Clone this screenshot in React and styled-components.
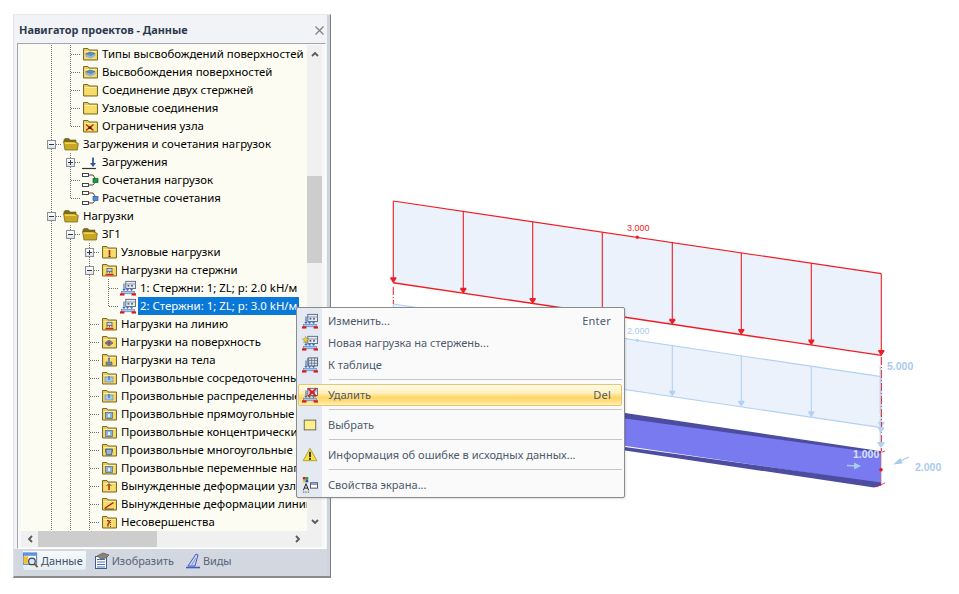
import React from 'react';
import styled, { createGlobalStyle } from 'styled-components';

const Global = createGlobalStyle`
  html, body { margin: 0; padding: 0; background: #fff; }
  #root { width: 959px; height: 594px; overflow: hidden; }
`;

const FONT = `"Noto Sans", "Liberation Sans", sans-serif`;

const Page = styled.div`
  position: relative;
  display: flex;
  align-items: flex-start;
  width: 959px;
  height: 594px;
  background: #fff;
  font-family: ${FONT};
  font-size: 11.4px;
`;

const Panel = styled.aside`
  flex: none;
  box-sizing: border-box;
  width: 318px;
  height: 564px;
  margin: 14px 0 0 13px;
  display: flex;
  flex-direction: column;
  background: #f1f3f6;
  border-top: 1px solid #e6e8ec;
  border-left: 1px solid #dfe2e8;
  border-right: 1px solid #7f7f7f;
  border-bottom: 2px solid #8a8a8a;
  box-shadow: inset -3px 0 0 #cfd3dc;
`;

const TitleBar = styled.header`
  flex: none;
  height: 28px;
  display: flex;
  align-items: center;
  justify-content: space-between;
  padding: 0 6px 0 5px;
  box-sizing: border-box;
`;

const Title = styled.h1`
  margin: 0;
  font-size: 10.9px;
  font-weight: 700;
  color: #2c3a4c;
`;

const CloseIcon = styled.svg`
  width: 9px;
  height: 9px;
  margin-top: 2px;
  stroke: #7a8088;
  stroke-width: 1.2;
`;

const Frame = styled.div`
  flex: none;
  box-sizing: border-box;
  margin-left: 3px;
  width: 309px;
  height: 506px;
  padding: 1px 3px;
  background: #f7f8f9;
  border: 1px solid #fff;
  border-top-color: #a4a6aa;
  border-left-color: #a4a6aa;
  display: grid;
  grid-template-columns: 286px 15px;
  grid-template-rows: 486px 16px;
`;

const Tree = styled.div`
  overflow: hidden;
  background: #fdfcf3;
  padding-left: 21px;
  color: #000;
`;

const Row = styled.div`
  display: flex;
  align-items: center;
  height: 18px;
  white-space: nowrap;
`;

const dotsV = `repeating-linear-gradient(to bottom, #707070 0 1px, transparent 1px 2px)`;
const dotsH = `repeating-linear-gradient(to right, #707070 0 1px, transparent 1px 2px)`;

const Cell = styled.span`
  flex: none;
  position: relative;
  width: 19px;
  height: 18px;
  &::before {
    content: '';
    position: absolute;
    left: 9px;
    top: 0;
    width: 1px;
    height: ${p => (p.$v === 'half' ? '10px' : p.$v === 'full' ? '18px' : '0')};
    background: ${dotsV};
  }
  &::after {
    content: '';
    position: absolute;
    left: 10px;
    top: 9px;
    height: 1px;
    width: ${p => (p.$h ? '10px' : '0')};
    background: ${dotsH};
  }
`;

const Expander = styled.span`
  position: absolute;
  z-index: 1;
  left: 5px;
  top: 5px;
  width: 7px;
  height: 7px;
  border: 1px solid #8b8f96;
  background: linear-gradient(#fff, #dfe2e6);
  &::before {
    content: '';
    position: absolute;
    left: 1px;
    top: 3px;
    width: 5px;
    height: 1px;
    background: #2e3a50;
  }
  &::after {
    content: '';
    position: absolute;
    left: 3px;
    top: 1px;
    width: 1px;
    height: ${p => (p.$plus ? '5px' : '0')};
    background: #2e3a50;
  }
`;

const TreeIconSlot = styled.span`
  flex: none;
  display: flex;
  width: 16px;
  height: 16px;
  margin-left: 2px;
`;

const Label = styled.span`
  flex: none;
  height: 18px;
  line-height: 18px;
  margin-left: 2px;
  padding: 0 2px;
  background: ${p => (p.$selected ? '#0a78d6' : 'transparent')};
  color: ${p => (p.$selected ? '#fff' : '#000')};
`;

const ScrollV = styled.div`
  background: #f0f0f0;
  position: relative;
  display: flex;
  flex-direction: column;
  align-items: center;
  justify-content: space-between;
  padding: 5px 0;
  box-sizing: border-box;
`;

const ThumbV = styled.div`
  position: absolute;
  left: 0;
  top: 131px;
  width: 15px;
  height: 87px;
  background: #cdcdcd;
`;

const ScrollH = styled.div`
  grid-column: 1 / 3;
  background: #f0f0f0;
  position: relative;
  display: flex;
  align-items: center;
  justify-content: space-between;
  padding: 0 20px 0 5px;
`;

const ThumbH = styled.div`
  position: absolute;
  left: 17px;
  top: 0;
  width: 119px;
  height: 16px;
  background: #cdcdcd;
`;

const Arrow = styled.svg`
  width: 8px;
  height: 8px;
  fill: none;
  stroke: #5a5a5a;
  stroke-width: 1.8;
`;

const TabBar = styled.nav`
  flex: 1;
  display: flex;
  align-items: flex-start;
  background: #d3d7e0;
  margin: 0 3px 0 0;
  padding: 2px 0 0 8px;
  font-size: 10.9px;
`;

const Tab = styled.div`
  display: flex;
  align-items: center;
  gap: 2px;
  height: 19px;
  padding: 0 3px 0 ${p => (p.$active ? '0' : '6px')};
  color: ${p => (p.$active ? '#3f5066' : '#56647a')};
  background: ${p => (p.$active ? 'linear-gradient(#f6f9fa, #e6eef2)' : 'transparent')};
  border: 1px solid ${p => (p.$active ? '#c7dbe0' : 'transparent')};
  border-top: none;
  border-radius: 0 0 4px 4px;
`;

const Viewport = styled.svg`
  flex: 1;
  display: block;
  height: 594px;
`;

const Menu = styled.div`
  position: absolute;
  left: 296px;
  top: 307px;
  box-sizing: border-box;
  width: 329px;
  height: 191px;
  padding: 2px 1px;
  display: flex;
  flex-direction: column;
  border: 1px solid #8b8b8b;
  border-radius: 2px;
  background: linear-gradient(to right, #e5e9f2 0 25px, #fafafa 25px);
  box-shadow: 1px 1px 2px rgba(0, 0, 0, 0.12);
  color: #4d5a6c;
  font-size: 11.05px;
`;

const MenuItem = styled.div`
  flex: none;
  box-sizing: border-box;
  height: 22px;
  display: flex;
  align-items: center;
  justify-content: space-between;
  padding: 0 10px 1px 0;
  border: 1px solid ${p => (p.$hot ? '#e6c66c' : 'transparent')};
  border-radius: 2px;
  margin-right: 1px;
  background: ${p =>
    p.$hot
      ? 'linear-gradient(#fffbe9 0%, #fff0c0 38%, #ffd768 62%, #ffdc78 78%, #fff0b8 100%)'
      : 'transparent'};
`;

const MenuMain = styled.span`
  display: flex;
  align-items: center;
`;

const MenuIconSlot = styled.span`
  flex: none;
  width: 29px;
  height: 20px;
  display: flex;
  align-items: center;
  padding-left: 3px;
  box-sizing: border-box;
`;

const Shortcut = styled.span`
  letter-spacing: 0.2px;
`;

const Separator = styled.hr`
  flex: none;
  box-sizing: border-box;
  height: 1px;
  margin: 3px 1px 4px 31px;
  border: none;
  background: #c6c6c6;
`;

/* ---- icons ---- */

const FolderShape = ({ children }) => (
  <svg width="16" height="16" viewBox="0 0 16 16">
    <path d="M1.500 2.500h4.500l1 1.500h8.500v10h-14z" fill="#eccb50" stroke="#7c6a26" />
    <path d="M2.500 5h12v1.200h-12z" fill="#fbf0a8" />
    <path d="M2.500 6.200h12v6.800h-12z" fill="#f6dc6c" />
    {children}
  </svg>
);

const OpenFolder = () => (
  <svg width="16" height="16" viewBox="0 0 16 16">
    <path d="M1 3.500l1-1h4l1 1.500h6v2h-12z" fill="#7d6c1e" stroke="#6d5c16" strokeWidth=".6" />
    <path d="M.5 5.500h11l3.800 2-1 6.500h-12.300z" fill="#c8a822" stroke="#6d5c16" strokeWidth=".7" />
    <path d="M1.500 6.500h9.500l2.500 1.500h-11.500z" fill="#ecd45a" />
  </svg>
);

const MiniBeam = ({ x = 4, y = 5, s = 1 }) => (
  <g transform={`translate(${x} ${y}) scale(${s})`}>
    <rect x="1.500" y=".5" width="5" height="3" fill="#cfd8e6" stroke="#4c5a70" strokeWidth=".8" />
    <path d="M1.500 3.500v2M4 3.500v2M6.500 3.500v2" stroke="#3a60b0" strokeWidth=".9" />
    <rect x="0" y="6" width="8" height="1.500" fill="#e02020" />
  </g>
);

const treeIcons = {
  plain: () => <FolderShape />,
  release: () => (
    <FolderShape>
      <path d="M3.500 8l4.500-2 5 1.500-4.500 2.500z" fill="#5e8ec4" stroke="#39608c" strokeWidth=".6" />
      <path d="M3.500 8v2.500l5 2 5-2.500v-2.500l-4.500 2.500z" fill="#8fb4da" />
    </FolderShape>
  ),
  restraint: () => (
    <FolderShape>
      <path d="M4 6.500l7.500 6M11.500 6.500l-7.500 6" stroke="#d02010" strokeWidth="1.500" />
      <rect x="6.500" y="8.500" width="3" height="2.500" fill="#302810" />
    </FolderShape>
  ),
  nodal: () => (
    <FolderShape>
      <path d="M8.500 6v5" stroke="#c01818" strokeWidth="1.600" />
      <rect x="7.500" y="11.500" width="2" height="1.500" fill="#302810" />
    </FolderShape>
  ),
  member: () => (
    <FolderShape>
      <MiniBeam x={4.500} y={5.800} />
    </FolderShape>
  ),
  surface: () => (
    <FolderShape>
      <path d="M4 9l4-3 4 3-4 3z" fill="#6a7ea8" stroke="#3a4a70" strokeWidth=".6" />
      <circle cx="8" cy="9" r="1.300" fill="#c04030" />
    </FolderShape>
  ),
  solid: () => (
    <FolderShape>
      <path d="M8 5.500v4" stroke="#3060a8" strokeWidth="1.400" />
      <path d="M5 10h6v3h-6z" fill="#7a8ea8" stroke="#3a4a70" strokeWidth=".5" />
    </FolderShape>
  ),
  free: () => (
    <FolderShape>
      <rect x="4" y="7" width="8" height="5" fill="#a8c8ea" stroke="#5a88bc" strokeWidth=".6" />
      <path d="M8 6v4" stroke="#2f68b8" strokeWidth="1.200" />
    </FolderShape>
  ),
  freeRect: () => (
    <FolderShape>
      <rect x="4.500" y="6.500" width="7" height="6" fill="#8fb0dc" stroke="#44669c" strokeWidth=".7" />
      <path d="M7 8h2v3h-2z" fill="#e8f0fa" />
    </FolderShape>
  ),
  freePoly: () => (
    <FolderShape>
      <path d="M4.500 7h7v2l-1 4h-5l-1-4z" fill="#6e8cc0" stroke="#34507e" strokeWidth=".7" />
      <path d="M7 8v4M9 8v4" stroke="#e8f0fa" strokeWidth=".8" />
    </FolderShape>
  ),
  imposed: () => (
    <FolderShape>
      <path d="M8 6v6" stroke="#b02020" strokeWidth="1.500" />
      <path d="M5.500 8l2.500-2.500 2.500 2.500" fill="none" stroke="#2a7a30" strokeWidth=".9" />
    </FolderShape>
  ),
  imposedLine: () => (
    <FolderShape>
      <path d="M3.500 12.500l9-6" stroke="#b02020" strokeWidth="1.500" />
      <path d="M4 13h9" stroke="#403810" strokeWidth=".8" />
    </FolderShape>
  ),
  imperfection: () => (
    <FolderShape>
      <path d="M6 6.500c3 0 3 2 1 3.500v2.500" fill="none" stroke="#b02020" strokeWidth="1.400" />
      <path d="M9.500 6v7" stroke="#403810" strokeWidth=".8" strokeDasharray="1 1" />
    </FolderShape>
  ),
  open: () => <OpenFolder />,
  loadcase: () => (
    <svg width="16" height="16" viewBox="0 0 16 16">
      <path d="M0 14.500h14" stroke="#333" strokeWidth="1.200" />
      <path d="M11 3.500v6" stroke="#4a6ca8" strokeWidth="2" />
      <path d="M8 9h6l-3 4z" fill="#2a58a8" />
    </svg>
  ),
  comboG: () => <Combo color="#10a030" edge="#0a6a20" />,
  comboB: () => <Combo color="#4a8ee0" edge="#2a5ca0" />,
  load: () => <LoadIcon />,
};

function Combo({ color, edge }) {
  return (
    <svg width="17" height="16" viewBox="0 0 17 16" style={{ overflow: 'visible' }}>
      <rect x=".5" y="1.500" width="6" height="3" fill="#fff" stroke="#333" strokeWidth=".9" />
      <rect x=".5" y="11.500" width="6" height="3" fill="#fff" stroke="#333" strokeWidth=".9" />
      <path d="M7 3h4l2 3v1M7 13h4l2-2.500" fill="none" stroke="#333" strokeWidth=".9" />
      <rect x="11" y="6.500" width="5" height="4" fill={color} stroke={edge} strokeWidth=".7" />
    </svg>
  );
}

function LoadIcon({ badge }) {
  return (
    <svg width="16" height="16" viewBox="0 0 18 18" style={{ overflow: 'visible' }}>
      <rect x="6.500" y="1.500" width="11" height="8" fill="#e6ebf3" stroke="#57657a" />
      <path d="M6.500 4.500h11" stroke="#8794a6" />
      <rect x="8.500" y="5.500" width="2" height="2" fill="#57657a" />
      <rect x="12.500" y="5.500" width="2" height="2" fill="#57657a" />
      <path d="M4.500 4v7.500M8.500 9.500v2M13 9.500v2" stroke="#3f72c4" strokeWidth="1.300" />
      <path d="M2.500 10h4l-2 2.500zM6.500 10.500h4l-2 2zM11 10.500h4l-2 2z" fill="#3f72c4" />
      <rect x="1.500" y="13" width="15" height="2.500" fill="#a9c8ee" stroke="#4f7cc0" strokeWidth=".7" />
      <rect x="0" y="15" width="5" height="2.500" fill="#e01818" />
      <rect x="13" y="15" width="5" height="2.500" fill="#e01818" />
      {badge === 'star' && (
        <path d="M4 1.500l1 2.500 2.500 .5-2 1.700 .6 2.600-2.100-1.300-2.100 1.300 .6-2.600-2-1.700 2.500-.5z" fill="#e8d440" stroke="#8c8020" strokeWidth=".5" />
      )}
      {badge === 'table' && (
        <g>
          <rect x="7.500" y="1" width="10" height="9" fill="#dfe5ee" stroke="#57657a" />
          <path d="M7.500 4h10M7.500 7h10M10.800 1v9M14.200 1v9" stroke="#57657a" strokeWidth=".8" />
        </g>
      )}
      {badge === 'x' && <path d="M7 1.500l9 9M16 1.500l-9 9" stroke="#e02020" strokeWidth="2" />}
    </svg>
  );
}

const WarningIcon = () => (
  <svg width="16" height="15" viewBox="0 0 18 17">
    <path d="M9 1.500l7.800 14h-15.600z" fill="#f6e23a" stroke="#a89a30" strokeLinejoin="round" />
    <rect x="8" y="5.500" width="2" height="6" fill="#222" />
    <rect x="8" y="12.500" width="2" height="2" fill="#222" />
  </svg>
);

const SelectIcon = () => (
  <svg width="16" height="16" viewBox="0 0 18 18">
    <rect x="2.500" y="3.500" width="13" height="11" fill="#fdf08a" stroke="#5c5c50" />
  </svg>
);

const DisplayIcon = () => (
  <svg width="16" height="18" viewBox="0 0 18 20">
    <rect x="1" y="1" width="3" height="3" fill="#c02020" />
    <rect x="4" y="1" width="3" height="3" fill="#20a030" />
    <rect x="1" y="4" width="3" height="3" fill="#e8c020" />
    <rect x="4" y="4" width="3" height="3" fill="#2050c0" />
    <path d="M1.500 16l3-7.500 3 7.500M2.500 13.500h4" fill="none" stroke="#222" strokeWidth="1.100" />
    <path d="M1 18h7" stroke="#222" strokeWidth="1" strokeDasharray="1 1" />
    <rect x="9.500" y="7.500" width="8" height="6" fill="#fff" stroke="#445" />
    <path d="M9.500 9h8" stroke="#5c7cc0" strokeWidth="1.500" />
  </svg>
);

const DataTabIcon = () => (
  <svg width="16" height="17" viewBox="0 0 17 17">
    <rect x=".5" y=".5" width="14" height="12" fill="#fff" stroke="#3f72c4" />
    <rect x=".5" y=".5" width="14" height="3" fill="#5e94dc" />
    <rect x=".5" y="4" width="5" height="8" fill="#f0c040" />
    <circle cx="9.500" cy="9.500" r="3.500" fill="#dbe8f4" stroke="#38465c" strokeWidth="1.300" />
    <path d="M12 12l3.500 3.500" stroke="#8a5a20" strokeWidth="2" />
  </svg>
);

const ShowTabIcon = () => (
  <svg width="16" height="17" viewBox="0 0 16 17">
    <rect x="1.500" y="4.500" width="11" height="12" fill="#fff" stroke="#3f5e90" />
    <path d="M3 7.500h8M3 10h8M3 12.500h8M3 15h8" stroke="#3f72c4" />
    <path d="M3 4l6-3 6 2-3 3-5 1z" fill="#8a8478" stroke="#4f4a40" strokeWidth=".6" />
  </svg>
);

const ViewsTabIcon = () => (
  <svg width="16" height="17" viewBox="0 0 16 17">
    <path d="M1 15.500h14" stroke="#3f5ec0" strokeWidth="1.600" />
    <path d="M3 14l8-12 2 1-3 11z" fill="#c7d4f0" stroke="#3f5ec0" />
    <path d="M6 14l5-8" stroke="#8a98c8" />
  </svg>
);

const rows = [
  ['vt', 'release', 'Типы высвобождений поверхностей'],
  ['vt', 'release', 'Высвобождения поверхностей'],
  ['vt', 'plain', 'Соединение двух стержней'],
  ['vt', 'plain', 'Узловые соединения'],
  ['vl', 'restraint', 'Ограничения узла'],
  ['m', 'open', 'Загружения и сочетания нагрузок'],
  ['vp', 'loadcase', 'Загружения'],
  ['vt', 'comboG', 'Сочетания нагрузок'],
  ['vl', 'comboB', 'Расчетные сочетания'],
  ['m', 'open', 'Нагрузки'],
  ['vm', 'open', 'ЗГ1'],
  ['vvp', 'nodal', 'Узловые нагрузки'],
  ['vvm', 'member', 'Нагрузки на стержни'],
  ['vvvt', 'load', '1: Стержни: 1; ZL; p: 2.0 kH/м'],
  ['vvvl', 'load', '2: Стержни: 1; ZL; p: 3.0 kH/м', true],
  ['vvt', 'member', 'Нагрузки на линию'],
  ['vvt', 'surface', 'Нагрузки на поверхность'],
  ['vvt', 'solid', 'Нагрузки на тела'],
  ['vvt', 'free', 'Произвольные сосредоточенные нагрузки'],
  ['vvt', 'free', 'Произвольные распределенные нагрузки'],
  ['vvt', 'freeRect', 'Произвольные прямоугольные нагрузки'],
  ['vvt', 'freeRect', 'Произвольные концентрические нагрузки'],
  ['vvt', 'freePoly', 'Произвольные многоугольные нагрузки'],
  ['vvt', 'freeRect', 'Произвольные переменные нагрузки'],
  ['vvt', 'imposed', 'Вынужденные деформации узлов'],
  ['vvt', 'imposedLine', 'Вынужденные деформации линий'],
  ['vvt', 'imperfection', 'Несовершенства'],
];

const cellProps = {
  v: { $v: 'full' },
  t: { $v: 'full', $h: true },
  l: { $v: 'half', $h: true },
  p: { $v: 'full', $h: true },
  m: { $v: 'full', $h: true },
};

function TreeRow({ path, icon, text, selected }) {
  const Icon = treeIcons[icon];
  return (
    <Row>
      {path.split('').map((c, i) => (
        <Cell key={i} {...cellProps[c]}>
          {(c === 'p' || c === 'm') && <Expander $plus={c === 'p'} />}
        </Cell>
      ))}
      <TreeIconSlot>
        <Icon />
      </TreeIconSlot>
      <Label $selected={selected}>{text}</Label>
    </Row>
  );
}

const menu = [
  { icon: <LoadIcon />, text: 'Изменить...', key: 'Enter' },
  { icon: <LoadIcon badge="star" />, text: 'Новая нагрузка на стержень...' },
  { icon: <LoadIcon badge="table" />, text: 'К таблице' },
  { sep: true },
  { icon: <LoadIcon badge="x" />, text: 'Удалить', key: 'Del', hot: true },
  { sep: true },
  { icon: <SelectIcon />, text: 'Выбрать' },
  { sep: true },
  { icon: <WarningIcon />, text: 'Информация об ошибке в исходных данных...' },
  { sep: true },
  { icon: <DisplayIcon />, text: 'Свойства экрана...' },
];

/* ---- drawing ---- */

const SLOPE = 0.149;
const RED = '#f01c24';
const BLUE = '#b3d1f2';
const topRed = x => 201 + SLOPE * (x - 393.3);
const botRed = x => 282.7 + SLOPE * (x - 393.3);
const topBlue = x => 304 + SLOPE * (x - 393.3);
const botBlue = x => 355 + SLOPE * (x - 393.3);
const beamTop = x => 413 + SLOPE * (x - 625);

const stations = [393.3, 463.3, 532.7, 602.3, 672.3, 741.3, 811.3, 881.3];

const Head = ({ x, y, color, w = 3 }) => (
  <path d={`M${x - w} ${y - 5}h${2 * w}v1.500l-${w} 4.500l-${w} -4.500z`} fill={color} />
);

const Drawing = () => (
  <Viewport viewBox="331 0 628 594" width="628" height="594">
    {/* red load */}
    <polygon
      points={`393.3,${topRed(393.3)} 881.3,${topRed(881.3)} 881.3,${botRed(881.3)} 393.3,${botRed(393.3)}`}
      fill="#ebf2fb"
    />
    {/* blue load */}
    <polygon
      points={`393.3,${topBlue(393.3)} 881.3,${topBlue(881.3)} 881.3,${botBlue(881.3)} 393.3,${botBlue(393.3)}`}
      fill="#ebf2fb"
    />
    <line x1="393.3" y1={topBlue(393.3)} x2="881.3" y2={topBlue(881.3)} stroke={BLUE} strokeWidth="1.200" />
    <line x1="393.3" y1={botBlue(393.3)} x2="881.3" y2={botBlue(881.3)} stroke={BLUE} strokeWidth="1.200" />
    {stations.map(x => (
      <g key={x}>
        <line x1={x} y1={topBlue(x)} x2={x} y2={botBlue(x) - 4} stroke={BLUE} strokeWidth="1.100" />
        <Head x={x} y={botBlue(x) - 1} color={BLUE} />
      </g>
    ))}
    <text x="627" y="334" fontFamily="Liberation Sans" fontSize="9" fill="#a9cbee">2.000</text>
    <circle cx="637.3" cy="340.300" r="1.600" fill={BLUE} />

    <line x1="393.3" y1={topRed(393.3)} x2="881.3" y2={topRed(881.3)} stroke={RED} strokeWidth="1.200" />
    <line x1="393.3" y1={botRed(393.3)} x2="881.3" y2={botRed(881.3)} stroke={RED} strokeWidth="1.400" />
    {stations.map(x => (
      <g key={x}>
        <line x1={x} y1={topRed(x)} x2={x} y2={botRed(x) - 3} stroke={RED} strokeWidth="1.100" />
        <Head x={x} y={botRed(x) - 0.5} color={RED} />
      </g>
    ))}
    <line x1="393.3" y1="287" x2="393.3" y2="304" stroke={RED} strokeDasharray="8 2 1 2" />
    <text x="627" y="231" fontFamily="Liberation Sans" fontSize="9" fill={RED}>3.000</text>
    <circle cx="637.3" cy="237.300" r="1.700" fill={RED} />

    {/* beam */}
    <polygon points="393,383 881.3,453 881.3,483.500 393,412" fill="#7a7af0" />
    <polygon points={`393,${beamTop(393)} 881.3,${beamTop(881.3)} 881.3,453.500 625,418.500 393,384`} fill="#4c4ca0" />
    <polygon points="393,412 625,447 881.3,482.500 881.3,485.500 874,487.500 625,450.500 393,416" fill="#4c4ca0" />
    <path d="M876 454l9-3M876 487l9-4" stroke={RED} strokeWidth="1" opacity=".8" />
    <line x1="881.5" y1="452" x2="881.5" y2="484" stroke="#f4c8d0" strokeWidth="1" />
    <line x1="881.3" y1="357" x2="881.3" y2="451" stroke={RED} strokeWidth="1.100" strokeDasharray="8 2 1 2" />
    <line x1="880.3" y1="366" x2="880.3" y2="446" stroke={BLUE} strokeWidth="1.300" strokeDasharray="48 2 1 2" />
    <Head x={881} y={432} color={BLUE} />
    <Head x={881} y={447} color={BLUE} w={3.500} />
    <circle cx="881" cy="469.700" r="1.800" fill="#f01010" />

    <text x="887" y="370" fontFamily="Liberation Sans" fontWeight="700" fontSize="10.500" fill="#a9cbee">5.000</text>
    <text x="853" y="458" fontFamily="Liberation Sans" fontWeight="700" fontSize="10.500" fill="#d4e4f8">1.000</text>
    <text x="915" y="471" fontFamily="Liberation Sans" fontWeight="700" fontSize="10.500" fill="#a9cbee">2.000</text>
    <path d="M847 465.500l9 .3" stroke="#a9cbee" strokeWidth="1.300" />
    <path d="M861 466l-7-3.500v7z" fill="#a9cbee" />
    <path d="M909 457l-11 5" stroke="#a9cbee" strokeWidth="1.300" />
    <path d="M893 464.500l7.500-6.500 2 5.500z" fill="#a9cbee" />
  </Viewport>
);

export default function App() {
  return (
    <Page>
      <Global />
      <Panel>
        <TitleBar>
          <Title>Навигатор проектов - Данные</Title>
          <CloseIcon viewBox="0 0 9 9">
            <path d="M.5 .5l8 8M8.500 .5l-8 8" />
          </CloseIcon>
        </TitleBar>
        <Frame>
          <Tree>
            {rows.map(([path, icon, text, selected], i) => (
              <TreeRow key={i} path={path} icon={icon} text={text} selected={selected} />
            ))}
          </Tree>
          <ScrollV>
            <ThumbV />
            <Arrow viewBox="0 0 8 8">
              <path d="M1 6l3-3 3 3" />
            </Arrow>
            <Arrow viewBox="0 0 8 8">
              <path d="M1 2l3 3 3-3" />
            </Arrow>
          </ScrollV>
          <ScrollH>
            <ThumbH />
            <Arrow viewBox="0 0 8 8">
              <path d="M6 1l-3 3 3 3" />
            </Arrow>
            <Arrow viewBox="0 0 8 8">
              <path d="M2 1l3 3-3 3" />
            </Arrow>
          </ScrollH>
        </Frame>
        <TabBar>
          <Tab $active>
            <DataTabIcon />
            Данные
          </Tab>
          <Tab>
            <ShowTabIcon />
            Изобразить
          </Tab>
          <Tab>
            <ViewsTabIcon />
            Виды
          </Tab>
        </TabBar>
      </Panel>
      <Drawing />
      <Menu>
        {menu.map((m, i) =>
          m.sep ? (
            <Separator key={i} />
          ) : (
            <MenuItem key={i} $hot={m.hot}>
              <MenuMain>
                <MenuIconSlot>{m.icon}</MenuIconSlot>
                {m.text}
              </MenuMain>
              {m.key && <Shortcut>{m.key}</Shortcut>}
            </MenuItem>
          )
        )}
      </Menu>
    </Page>
  );
}
